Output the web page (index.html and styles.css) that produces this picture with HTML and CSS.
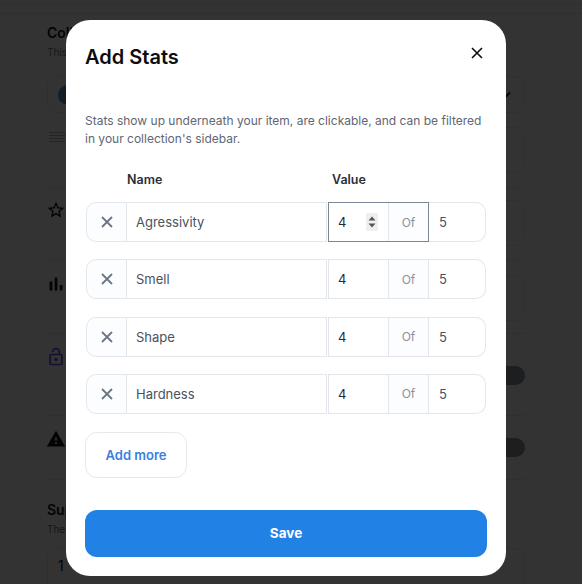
FILE: index.html
```html
<!DOCTYPE html>
<html lang="en">
<head>
    <meta charset="UTF-8">
    <title>Add Stats</title>
    <link rel="stylesheet" href="styles.css">
</head>
<body>
    <div class="page">
        <div class="topbar"><div class="topbar-line"></div></div>

        <section class="section collection">
            <h2 class="section-title">Collection</h2>
            <p class="section-sub">This is</p>
            <div class="select-box">
                <span class="avatar"></span>
                <svg class="chevron" viewBox="0 0 12 8"><path d="M1 1.500l5 5 5-5" fill="none" stroke="#111" stroke-width="1.800"/></svg>
            </div>
            <div class="trait">
                <svg class="list-icon" viewBox="0 0 16 10"><path d="M0 .5h16M0 3.500h16M0 6.500h16M0 9.500h16" stroke="#b5b5b5" fill="none"/></svg>
                <span class="plus-box"><span class="plus-dash"></span></span>
            </div>
        </section>

        <section class="section trait-row">
            <svg class="side-icon" viewBox="0 0 24 24"><path fill="#111" d="M22 9.240l-7.190-.62L12 2 9.190 8.630 2 9.240l5.460 4.730L5.820 21 12 17.270 18.180 21l-1.630-7.030L22 9.240zM12 15.400l-3.760 2.270 1-4.280-3.320-2.880 4.380-.38L12 6.100l1.710 4.040 4.380.38-3.320 2.880 1 4.280L12 15.400z"/></svg>
            <span class="plus-box"><span class="plus-dash"></span></span>
        </section>

        <section class="section trait-row bars-row">
            <svg class="side-icon bars-icon" viewBox="0 0 24 24"><path fill="#111" d="M5 9.200h3V19H5zM10.600 5h2.800v14h-2.800zm5.600 8H19v6h-2.800z"/></svg>
            <span class="plus-box"><span class="plus-dash"></span></span>
        </section>

        <section class="section toggle-row unlock">
            <svg class="side-icon" viewBox="0 0 24 24"><path fill="#6a45e8" d="M12 17c1.100 0 2-.9 2-2s-.9-2-2-2-2 .9-2 2 .9 2 2 2zm6-9h-1V6c0-2.760-2.240-5-5-5S7 3.240 7 6h1.900c0-1.710 1.390-3.100 3.100-3.100 1.710 0 3.100 1.390 3.100 3.100v2H6c-1.100 0-2 .9-2 2v10c0 1.100.9 2 2 2h12c1.100 0 2-.9 2-2V10c0-1.100-.9-2-2-2zm0 12H6V10h12v10z"/></svg>
            <span class="toggle"></span>
        </section>

        <section class="section toggle-row explicit">
            <svg class="side-icon" viewBox="0 0 24 24"><path fill="#111" d="M1 21h22L12 2 1 21zm12-3h-2v-2h2v2zm0-4h-2v-4h2v4z"/></svg>
            <span class="toggle"></span>
        </section>

        <section class="supply">
            <h2 class="section-title">Supply</h2>
            <p class="section-sub">The number</p>
            <div class="supply-box">1</div>
        </section>
    </div>

    <div class="backdrop"></div>

    <div class="modal">
        <div class="modal-head">
            <h1 class="modal-title">Add Stats</h1>
            <button class="modal-close" type="button">
                <svg viewBox="0 0 12 12"><path d="M1 1l10 10M11 1L1 11" fill="none" stroke="#0d0d0d" stroke-width="1.600"/></svg>
            </button>
        </div>
        <p class="modal-desc">Stats show up underneath your item, are clickable, and can be filtered in your collection's sidebar.</p>

        <div class="stat-labels">
            <span class="label-name">Name</span>
            <span class="label-value">Value</span>
        </div>

        <div class="stat-list">
            <div class="stat-row">
                <button class="stat-remove" type="button"><svg viewBox="0 0 12 12"><path d="M1 1l10 10M11 1L1 11" fill="none" stroke="#6b7683" stroke-width="1.800"/></svg></button>
                <div class="stat-name">Agressivity</div>
                <div class="stat-pair focused">
                    <div class="stat-value">4
                        <span class="spinner"><svg viewBox="0 0 12 18"><path d="M6 3.500l3.500 4h-7zM6 14.500l3.500-4h-7z" fill="#555"/></svg></span>
                    </div>
                    <div class="stat-of">Of</div>
                </div>
                <div class="stat-max">5</div>
            </div>
            <div class="stat-row">
                <button class="stat-remove" type="button"><svg viewBox="0 0 12 12"><path d="M1 1l10 10M11 1L1 11" fill="none" stroke="#6b7683" stroke-width="1.800"/></svg></button>
                <div class="stat-name">Smell</div>
                <div class="stat-pair">
                    <div class="stat-value">4</div>
                    <div class="stat-of">Of</div>
                </div>
                <div class="stat-max">5</div>
            </div>
            <div class="stat-row">
                <button class="stat-remove" type="button"><svg viewBox="0 0 12 12"><path d="M1 1l10 10M11 1L1 11" fill="none" stroke="#6b7683" stroke-width="1.800"/></svg></button>
                <div class="stat-name">Shape</div>
                <div class="stat-pair">
                    <div class="stat-value">4</div>
                    <div class="stat-of">Of</div>
                </div>
                <div class="stat-max">5</div>
            </div>
            <div class="stat-row">
                <button class="stat-remove" type="button"><svg viewBox="0 0 12 12"><path d="M1 1l10 10M11 1L1 11" fill="none" stroke="#6b7683" stroke-width="1.800"/></svg></button>
                <div class="stat-name">Hardness</div>
                <div class="stat-pair">
                    <div class="stat-value">4</div>
                    <div class="stat-of">Of</div>
                </div>
                <div class="stat-max">5</div>
            </div>
        </div>

        <button class="btn-add" type="button">Add more</button>
        <button class="btn-save" type="button">Save</button>
    </div>
</body>
</html>
```

FILE: styles.css
```css
* {
    box-sizing: border-box;
}

html, body {
    height: 584px;
    overflow: hidden;
}

body {
    margin: 0;
    font-family: "Inter", "Open Sans", sans-serif;
    background-color: #fff;
    color: #111;
}

/* page behind the dialog */
.page {
    width: 582px;
    padding: 0 57px 0 47px;
}

.topbar {
    height: 14px;
    margin: 0 -57px 0 -47px;
    border-bottom: 1px solid #e8e8e8;
}

.topbar-line {
    height: 4px;
    border-bottom: 1px solid #e8e8e8;
}

.section {
    border-bottom: 1px solid #e6e8eb;
}

.section-title {
    margin: 0;
    font-size: 14px;
    line-height: 22px;
    font-weight: 600;
}

.section-sub {
    margin: 1px 0 0;
    font-size: 10px;
    line-height: 14px;
    color: #777;
}

.collection {
    height: 174px;
    padding-top: 8px;
}

.select-box {
    display: flex;
    align-items: center;
    justify-content: space-between;
    height: 37px;
    margin-top: 17px;
    padding: 0 13px 0 10px;
    border: 1px solid #e6e8eb;
    border-radius: 10px;
}

.avatar {
    width: 20px;
    height: 20px;
    border-radius: 50%;
    background-color: #5f94c4;
}

.chevron {
    width: 12px;
    height: 8px;
}

.trait {
    display: flex;
    justify-content: space-between;
    margin-top: 14px;
}

.list-icon {
    width: 16px;
    height: 10px;
    margin: 5px 0 0 2px;
}

.plus-box {
    display: flex;
    align-items: center;
    width: 60px;
    height: 46px;
    border: 1px solid #e6e8eb;
    border-radius: 10px;
}

.plus-dash {
    width: 3px;
    height: 1px;
    margin-left: 17px;
    background-color: #2b6cb0;
}

.trait-row {
    display: flex;
    align-items: flex-start;
    justify-content: space-between;
    height: 73px;
    padding-top: 12px;
}

.bars-row {
    padding-top: 14px;
}

.side-icon {
    width: 20px;
    height: 20px;
    margin-left: -1px;
}

.bars-icon {
    width: 22px;
    height: 22px;
    margin: -2px 0 0 -2px;
}

.toggle-row {
    display: flex;
    align-items: flex-start;
    justify-content: space-between;
    padding-top: 13px;
}

.unlock {
    height: 82px;
}

.unlock .toggle {
    margin-top: 19px;
}

.explicit {
    height: 64px;
}

.explicit .toggle {
    margin-top: 9px;
}

.toggle {
    width: 40px;
    height: 19px;
    border-radius: 10px;
    background-color: #93979d;
}

.supply {
    padding-top: 19px;
}

.supply-box {
    height: 46px;
    margin-top: 12px;
    padding: 8px 10px;
    font-size: 14px;
    border: 1px solid #e6e8eb;
    border-radius: 10px;
}

.backdrop {
    position: fixed;
    inset: 0;
    background-color: rgba(0, 0, 0, 0.8);
}

/* dialog */
.modal {
    position: fixed;
    left: 66px;
    top: 20px;
    width: 440px;
    height: 556px;
    padding: 0 19px;
    background-color: #fff;
    border-radius: 24px;
}

.modal-head {
    display: flex;
    justify-content: space-between;
    padding-top: 24px;
}

.modal-title {
    margin: 0;
    font-size: 20px;
    line-height: 26px;
    font-weight: 600;
    color: #0d0d0d;
}

.modal-close {
    width: 12px;
    height: 12px;
    margin: 3px 4px 0 0;
    padding: 0;
    border: none;
    background: none;
}

.modal-close svg {
    display: block;
}

.modal-desc {
    margin: 42px 0 0;
    font-size: 12px;
    line-height: 17.500px;
    color: #5f6672;
}

.stat-labels {
    display: flex;
    margin-top: 25px;
    font-size: 12.500px;
    line-height: 16px;
    font-weight: 600;
    color: #2b2f38;
}

.label-name {
    width: 247px;
    padding-left: 42px;
}

.stat-list {
    display: flex;
    flex-direction: column;
    gap: 17.300px;
    margin-top: 14px;
    padding-left: 1px;
}

.stat-row {
    display: flex;
    width: 400px;
    height: 40px;
    font-size: 13px;
    color: #4a5260;
}

.stat-remove {
    display: flex;
    align-items: center;
    justify-content: center;
    width: 41px;
    padding: 0;
    background-color: #fcfdff;
    border: 1px solid #e3e7ec;
    border-radius: 10px 0 0 10px;
}

.stat-remove svg {
    width: 12px;
    height: 12px;
}

.stat-name {
    display: flex;
    align-items: center;
    width: 200px;
    padding-left: 9px;
    border: 1px solid #e3e7ec;
    border-left: none;
}

.stat-pair {
    display: flex;
    width: 101px;
    margin-left: 1px;
    border: 1px solid #e3e7ec;
}

.stat-pair.focused {
    border-color: #7b8794;
}

.stat-value {
    position: relative;
    display: flex;
    align-items: center;
    width: 59px;
    padding-left: 9px;
    color: #1f2a37;
}

.spinner {
    position: absolute;
    left: 37px;
    top: 10px;
    width: 12px;
    height: 18px;
    background-color: #efefef;
}

.spinner svg {
    display: block;
}

.stat-of {
    display: flex;
    align-items: center;
    justify-content: center;
    width: 40px;
    font-size: 12px;
    color: #8a919c;
    background-color: #fcfdff;
    border-left: 1px solid #e3e7ec;
}

.stat-max {
    display: flex;
    align-items: center;
    flex: 1;
    padding-left: 10px;
    border: 1px solid #e3e7ec;
    border-left: none;
    border-radius: 0 10px 10px 0;
}

.btn-add {
    display: block;
    width: 102px;
    height: 46px;
    margin-top: 18px;
    font: 600 13px "Inter", sans-serif;
    color: #3a7fe0;
    background-color: #fff;
    border: 1px solid #e6e8eb;
    border-radius: 12px;
}

.btn-save {
    display: block;
    width: 402px;
    height: 47px;
    margin-top: 32px;
    font: 700 13.500px "Inter", sans-serif;
    color: #fff;
    background-color: #2181e5;
    border: none;
    border-radius: 12px;
}
```
